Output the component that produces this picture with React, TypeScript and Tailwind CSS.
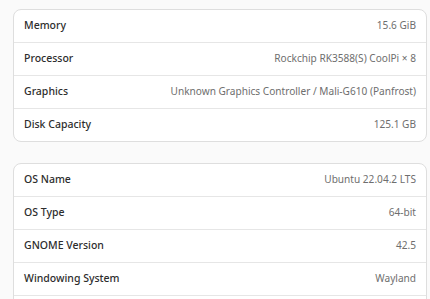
import React from "react";

const groups: [string, string][][] = [
  [
    ["Memory", "15.6 GiB"],
    ["Processor", "Rockchip RK3588(S) CoolPi × 8"],
    ["Graphics", "Unknown Graphics Controller / Mali-G610 (Panfrost)"],
    ["Disk Capacity", "125.1 GB"],
  ],
  [
    ["OS Name", "Ubuntu 22.04.2 LTS"],
    ["OS Type", "64-bit"],
    ["GNOME Version", "42.5"],
    ["Windowing System", "Wayland"],
  ],
];

export default function App() {
  return (
    <div
      className="w-[430px] h-[299px] overflow-hidden bg-[#fafafa] pt-[9px] pl-[13px] pr-[3px] flex flex-col gap-[21px]"
      style={{ fontFamily: '"Noto Sans", "Open Sans", sans-serif' }}
    >
      {groups.map((rows, gi) => (
        <div
          key={gi}
          className="shrink-0 bg-white border border-[#dedede] rounded-[8px] flex flex-col"
        >
          {rows.map(([label, value], ri) => (
            <div
              key={label}
              className={
                "shrink-0 flex items-center justify-between pl-[10px] pr-[10px] " +
                (ri > 0 ? "border-t border-[#e6e6e6] h-[33px]" : "h-[32px]")
              }
            >
              <span className="font-medium text-[10.5px] text-[#2d2d2d]">{label}</span>
              <span className="text-[10.1px] text-[#6e6e6e]">{value}</span>
            </div>
          ))}
          {gi === 1 && <div className="shrink-0 h-[33px] border-t border-[#e6e6e6]" />}
        </div>
      ))}
    </div>
  );
}
